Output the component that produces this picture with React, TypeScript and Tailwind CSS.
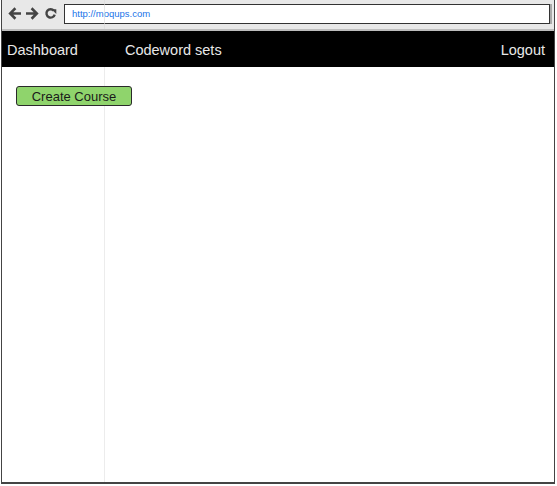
import type { ReactElement } from 'react';

const BackIcon = () => (
  <svg width="13" height="13" viewBox="0 0 13 13" className="text-[#444]">
    <path d="M12 6.5H3M6.5 2.2 2.2 6.5 6.5 10.8" fill="none" stroke="currentColor" strokeWidth="2.6" strokeLinecap="square" />
  </svg>
);

const ForwardIcon = () => (
  <svg width="13" height="13" viewBox="0 0 13 13" className="text-[#444]">
    <path d="M1 6.5H10M6.5 2.2 10.8 6.5 6.5 10.8" fill="none" stroke="currentColor" strokeWidth="2.6" strokeLinecap="square" />
  </svg>
);

const ReloadIcon = () => (
  <svg width="13" height="13" viewBox="0 0 13 13" className="text-[#444]">
    <path d="M9.8 3.6A4.2 4.2 0 1 0 10.7 7.6" fill="none" stroke="currentColor" strokeWidth="2.4" />
    <path d="M7.5 2.2h4.8v4.8z" fill="currentColor" />
  </svg>
);

const NavLink = ({ label, className = '' }: { label: string; className?: string }): ReactElement => (
  <span className={`text-[14.5px] leading-none text-[#e8e8e8] ${className}`}>{label}</span>
);

export default function App() {
  return (
    <div className="relative h-[486px] w-[557px] overflow-hidden bg-white font-['Liberation_Sans',Arial,sans-serif]">
      <div className="ml-px flex h-[484px] w-[554px] flex-col border-x border-b-2 border-[#444]">
        {/* browser chrome */}
        <div className="flex h-[31px] items-center border-b-2 border-[#bdbdbd] bg-[#e8e8e8] pb-[2px] pl-[6px]">
          <div className="flex items-center gap-[5px]">
            <BackIcon />
            <ForwardIcon />
            <ReloadIcon />
          </div>
          <div className="ml-[7px] flex h-[20px] w-[486px] items-center border border-[#333] bg-white pl-[7px] pt-px shadow-[2px_0_0_#aaa]">
            <span className="text-[9.5px] text-[#1a73e8]">http://moqups.com</span>
          </div>
        </div>

        {/* top nav */}
        <div className="relative z-10 flex h-[36px] items-center bg-black pl-[5px] pr-[9px] pt-[2px]">
          <NavLink label="Dashboard" />
          <NavLink label="Codeword sets" className="ml-[47px]" />
          <NavLink label="Logout" className="ml-auto" />
        </div>

        {/* content */}
        <div className="flex flex-1">
          <div className="w-[103px] border-r border-[#ececec] pl-[14px] pt-[19px]">
            <button className="relative z-10 block h-[20px] w-[116px] rounded-[3px] border border-[#2a2a2a] bg-[#8fd46c] text-[13px] leading-none text-[#1a1a1a]">
              Create Course
            </button>
          </div>
          <div className="flex-1" />
        </div>
      </div>

      {/* faint layout guide running through the chrome */}
      <div className="pointer-events-none absolute left-[104px] top-0 h-[29px] w-px bg-[#d8d8d8] opacity-60" />
    </div>
  );
}
